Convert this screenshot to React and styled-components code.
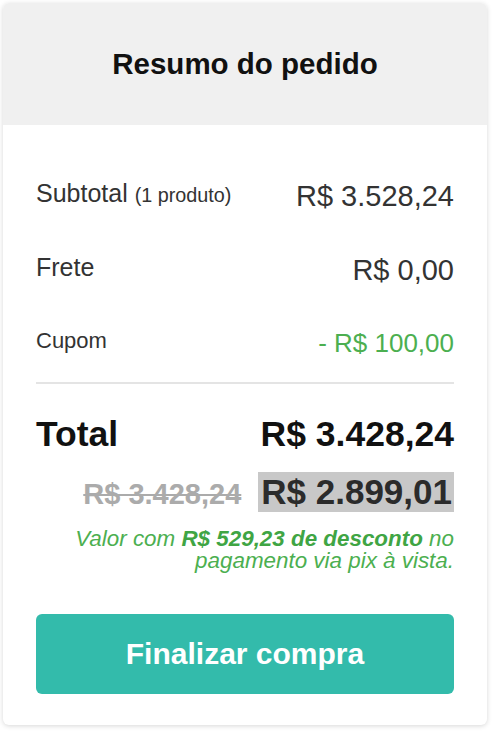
import React from 'react'
import styled, { createGlobalStyle } from 'styled-components'

const GlobalStyle = createGlobalStyle`
  html, body {
    margin: 0;
    padding: 0;
    background: #ffffff;
    font-family: "Liberation Sans", Arial, sans-serif;
  }
`;

const Page = styled.div`
  padding: 3px 13px 9px 3px;
`;

const Card = styled.div`
  background: #ffffff;
  border-radius: 6px;
  box-shadow: 0 1px 5px rgba(0, 0, 0, 0.16);
  overflow: hidden;
`;

const Header = styled.div`
  height: 122px;
  background: #f0f0f0;
  display: flex;
  align-items: center;
  justify-content: center;
`;

const Title = styled.h2`
  margin: 0;
  font-size: 29.5px;
  font-weight: 700;
  color: #111;
`;

const Body = styled.div`
  padding: 54px 33px 31px 33px;
  display: flex;
  flex-direction: column;
`;

const Row = styled.div`
  display: flex;
  justify-content: space-between;
  align-items: flex-start;
  margin-bottom: ${({ $gap }) => $gap || 0}px;
`;

const Label = styled.span`
  font-size: ${({ $size }) => $size}px;
  color: #333;
`;

const Small = styled.span`
  font-size: 19.8px;
`;

const Value = styled.span`
  font-size: ${({ $size }) => $size}px;
  color: ${({ $color }) => $color || '#333'};
  margin-top: ${({ $offset }) => $offset || 0}px;
`;

const Divider = styled.hr`
  margin: 0 0 30px 0;
  border: none;
  height: 2px;
  background: #e4e4e4;
`;

const TotalRow = styled.div`
  display: flex;
  justify-content: space-between;
  align-items: baseline;
  font-size: 35.5px;
  font-weight: 700;
  color: #111;
  margin-bottom: 17px;
`;

const PixRow = styled.div`
  display: flex;
  justify-content: flex-end;
  align-items: baseline;
  gap: 17px;
  margin-bottom: 16px;
`;

const OldPrice = styled.span`
  font-size: 29px;
  font-weight: 700;
  color: #ababab;
  text-decoration: line-through;
`;

const PixPrice = styled.span`
  font-size: 35px;
  font-weight: 700;
  color: #2b2b2b;
  background: #c8c8c8;
  padding: 0 2px 0 3px;
`;

const Note = styled.p`
  margin: 0 0 42px 0;
  text-align: right;
  font-size: 22.4px;
  line-height: 22px;
  font-style: italic;
  color: #4caf50;

  strong {
    font-weight: 700;
    color: #3fa544;
  }
`;

const Button = styled.button`
  height: 80px;
  border: none;
  border-radius: 6px;
  background: #33bbab;
  color: #fff;
  font-family: "Liberation Sans", Arial, sans-serif;
  font-size: 30px;
  font-weight: 700;
  cursor: pointer;
`;

const App = () => {
    return (
        <>
            <GlobalStyle />
            <Page>
                <Card>
                    <Header>
                        <Title>Resumo do pedido</Title>
                    </Header>
                    <Body>
                        <Row $gap={40}>
                            <Label $size={25}>Subtotal <Small>(1 produto)</Small></Label>
                            <Value $size={29} $offset={1}>R$ 3.528,24</Value>
                        </Row>
                        <Row $gap={41}>
                            <Label $size={25}>Frete</Label>
                            <Value $size={29} $offset={1}>R$ 0,00</Value>
                        </Row>
                        <Row $gap={23}>
                            <Label $size={22}>Cupom</Label>
                            <Value $size={26} $color="#4caf50">- R$ 100,00</Value>
                        </Row>
                        <Divider />
                        <TotalRow>
                            <span>Total</span>
                            <span>R$ 3.428,24</span>
                        </TotalRow>
                        <PixRow>
                            <OldPrice>R$ 3.428,24</OldPrice>
                            <PixPrice>R$ 2.899,01</PixPrice>
                        </PixRow>
                        <Note>
                            Valor com <strong>R$ 529,23 de desconto</strong> no pagamento via pix à vista.
                        </Note>
                        <Button>Finalizar compra</Button>
                    </Body>
                </Card>
            </Page>
        </>
    )
}

export default App;
